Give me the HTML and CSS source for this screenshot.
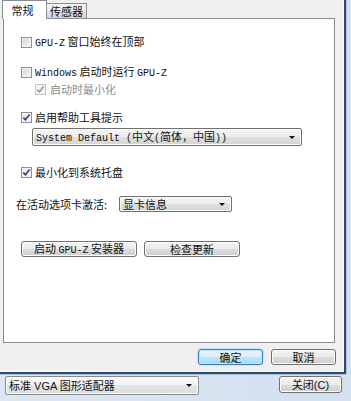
FILE: index.html
```html
<!DOCTYPE html>
<html>
<head>
<meta charset="utf-8">
<link rel="stylesheet" href="styles.css">
</head>
<body>
<div class="screen">
  <div class="dialog">
    <div class="tabs">
      <div class="tab active">常规</div>
      <div class="tab">传感器</div>
    </div>
    <div class="panel">
      <div class="check r1"><span class="box"></span><span class="lbl"><span class="lat">GPU-Z</span> 窗口始终在顶部</span></div>
      <div class="check r2"><span class="box"></span><span class="lbl"><span class="lat">Windows</span> 启动时运行 <span class="lat">GPU-Z</span></span></div>
      <div class="check r3 sub disabled"><span class="box checked"><svg viewBox="0 0 11 11" width="11" height="11"><path d="M2.3 5.6 L4.4 7.8 L8.6 2.6" fill="none" stroke="#9a9a9a" stroke-width="1.6"/></svg></span><span class="lbl">启动时最小化</span></div>
      <div class="check r4"><span class="box checked"><svg viewBox="0 0 11 11" width="11" height="11"><path d="M2.3 5.6 L4.4 7.8 L8.6 2.6" fill="none" stroke="#2c3f7a" stroke-width="1.6"/></svg></span><span class="lbl">启用帮助工具提示</span></div>
      <div class="select lang"><span class="val"><span class="lat">System Default (</span>中文<span class="lat">(</span>简体，中国<span class="lat">))</span></span><span class="arrow"></span></div>
      <div class="check r5"><span class="box checked"><svg viewBox="0 0 11 11" width="11" height="11"><path d="M2.3 5.6 L4.4 7.8 L8.6 2.6" fill="none" stroke="#2c3f7a" stroke-width="1.6"/></svg></span><span class="lbl">最小化到系统托盘</span></div>
      <div class="tabrow">
        <span class="tlabel">在活动选项卡激活:</span>
        <div class="select card"><span class="val">显卡信息</span><span class="arrow"></span></div>
      </div>
      <div class="btnrow">
        <div class="btn wide"><span class="bt">启动 <span class="lat">GPU-Z</span> 安装器</span></div>
        <div class="btn mid"><span class="bt">检查更新</span></div>
      </div>
    </div>
    <div class="actions">
      <div class="btn dlg default"><span class="bt">确定</span></div>
      <div class="btn dlg"><span class="bt">取消</span></div>
    </div>
  </div>
  <div class="mainbar">
    <div class="select gpu"><span class="val">标准 VGA 图形适配器</span><span class="arrow"></span></div>
    <div class="btn close"><span class="bt">关闭(C)</span></div>
  </div>
</div>
</body>
</html>
```

FILE: styles.css
```css
* { box-sizing: border-box; }
html, body { margin: 0; padding: 0; }
body {
  width: 351px;
  height: 401px;
  overflow: hidden;
  font-family: "Noto Sans CJK SC", "Liberation Sans", sans-serif;
  font-size: 11px;
  line-height: 12px;
  color: #111;
}
.screen {
  width: 351px;
  height: 401px;
  display: flex;
  flex-direction: column;
  background: linear-gradient(to right, #dde7f2, #d3e0ee);
}
.dialog {
  width: 346px;
  height: 374px;
  flex: none;
  background: #f0f0f0;
  border-right: 2px solid #2f4b66;
  border-bottom: 2px solid #2f4b66;
  box-shadow: 1px 0 0 #a9c1da, 0 1px 0 #a9c1da, inset -1px -1px 0 #fafafa;
  display: flex;
  flex-direction: column;
}
.lat {
  font-family: "Liberation Mono", monospace;
  font-size: 10px;
}
.tabs {
  height: 18px;
  display: flex;
  align-items: flex-end;
  padding-left: 2px;
  position: relative;
  z-index: 1;
}
.tab {
  height: 15px;
  width: 41px;
  margin-left: -1px;
  border: 1px solid #898c95;
  border-bottom: none;
  background: linear-gradient(#f4f4f4, #ececec 50%, #e0e0e0 50%, #d6d6d6);
  text-align: center;
  line-height: 14px;
}
.tab.active {
  height: 19px;
  width: 45px;
  margin-left: 0;
  margin-bottom: -1px;
  background: #fff;
  line-height: 18px;
  position: relative;
  z-index: 2;
  padding-right: 4px;
}
.panel {
  margin-left: 3px;
  width: 332px;
  height: 325px;
  flex: none;
  background: #fff;
  border: 1px solid #898c95;
  display: flex;
  flex-direction: column;
  align-items: flex-start;
  padding-left: 17px;
}
.check {
  display: flex;
  align-items: center;
  height: 12px;
}
.check .box {
  width: 11px;
  height: 11px;
  border: 1px solid #8e8f8f;
  background: linear-gradient(135deg, #d2d4d8, #f8f8f8);
  box-shadow: inset 0 0 0 1px #f4f4f4;
  margin-right: 3px;
  position: relative;
  flex: none;
}
.check .box.checked { background: linear-gradient(135deg, #e4e6ea, #fcfcfc); }
.check .box svg { position: absolute; left: -1px; top: -1px; }
.check.disabled .box { border-color: #c4c4c4; background: #f4f4f4; }
.check.disabled .lbl { color: #8a8a8a; }
.r1 { margin-top: 17px; }
.r2 { margin-top: 18px; }
.r3 { margin-top: 5px; }
.sub { margin-left: 14px; }
.sub .box { margin-right: 4px; }
.r4 { margin-top: 16px; }
.select {
  display: flex;
  align-items: center;
  border: 1px solid #707070;
  border-radius: 2px;
  background: linear-gradient(#f4f4f4, #ececec 50%, #e0e0e0 50%, #d4d4d4);
  box-shadow: inset 0 0 0 1px #fbfbfb;
  padding-left: 3px;
  padding-right: 6px;
}
.select .val { flex: 1; white-space: nowrap; }
.select .arrow {
  width: 0;
  height: 0;
  border-left: 3px solid transparent;
  border-right: 3px solid transparent;
  border-top: 3px solid #111;
}
.lang {
  margin-top: 5px;
  margin-left: 11px;
  width: 270px;
  height: 18px;
}
.r5 { margin-top: 20px; }
.tabrow {
  display: flex;
  align-items: center;
  margin-top: 18px;
  margin-left: -5px;
}
.tlabel { width: 103px; }
.card { width: 113px; height: 16px; }
.btnrow {
  display: flex;
  gap: 7px;
  margin-top: 29px;
}
.btn {
  height: 16px;
  border: 1px solid #707070;
  border-radius: 3px;
  background: linear-gradient(#f3f3f3, #ebebeb 50%, #dddddd 50%, #cfcfcf);
  box-shadow: inset 0 0 0 1px #fcfcfc;
  display: flex;
  align-items: center;
  justify-content: center;
  white-space: nowrap;
}
.bt { white-space: pre; }
.wide { width: 116px; }
.mid { width: 96px; }
.actions {
  display: flex;
  justify-content: flex-end;
  gap: 8px;
  padding-right: 8px;
  margin-top: 6px;
}
.dlg { width: 65px; }
.btn.default {
  border-color: #3c7fb1;
  background: linear-gradient(#eaf6fd, #d9f0fc 50%, #bee6fd 50%, #a7d9f5);
  box-shadow: inset 0 0 0 1px #b8e4fb, 0 0 2px #6fc2f0;
}
.mainbar {
  display: flex;
  align-items: flex-start;
  padding: 2px 9px 0 5px;
}
.gpu {
  width: 194px;
  height: 19px;
  background: linear-gradient(#fbfbfb, #f1f1f1 50%, #e6e6e6 50%, #dcdcdc);
  border-color: #8a8a8a;
  font-family: "Liberation Sans", "Noto Sans CJK SC", sans-serif;
}
.close {
  margin-left: auto;
  width: 63px;
  height: 17px;
  font-family: "Liberation Sans", "Noto Sans CJK SC", sans-serif;
}
```
